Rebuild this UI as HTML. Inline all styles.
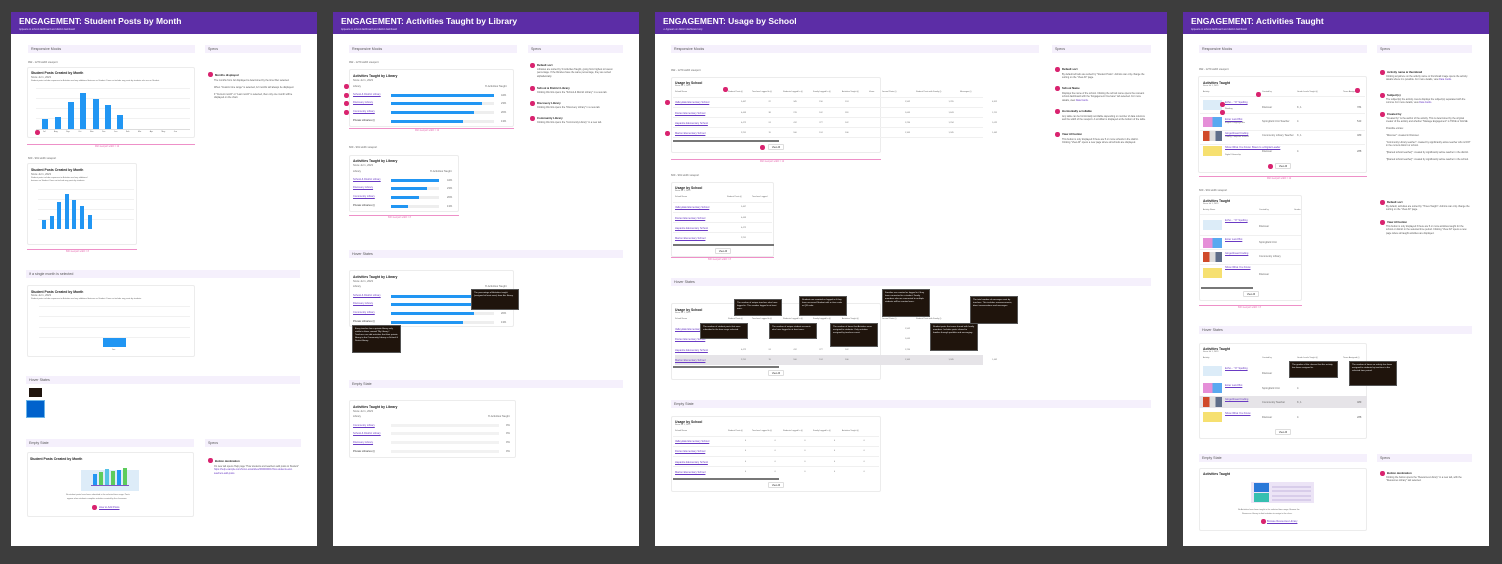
<!DOCTYPE html>
<html><head><meta charset="utf-8"><style>
*{margin:0;padding:0;box-sizing:border-box}
body{width:1502px;height:564px;background:#3d3d3d;position:relative;overflow:hidden;font-family:"Liberation Sans",sans-serif}
div,span{position:absolute}
.pg{background:#fff;top:12px;height:534px}
.hd{background:#5c2da6;top:12px;height:22px}
.h1{color:#fff;font-weight:bold;font-size:8.5px;white-space:nowrap}
.sub{color:#e8dcff;font-size:2.4px;white-space:nowrap}
.bar{background:#f5f0fc;height:8px;font-size:3.6px;color:#555;line-height:8px;padding-left:3px;white-space:nowrap}
.card{border:1px solid #ececec;border-radius:2px;background:#fff}
.t{font-size:2.6px;color:#666;white-space:nowrap}
.tt{font-size:3.4px;color:#222;font-weight:bold;white-space:nowrap}
.lk{font-size:2.6px;color:#6a3bc4;white-space:nowrap;text-decoration:underline}
.dim{height:1px;background:#ee90c8}
.dl{font-size:2.3px;color:#e56bb0;white-space:nowrap}
.dot{width:4.5px;height:4.5px;border-radius:50%;background:#d9236f}
.tip{background:#1f140c;border:1px solid #555;color:#eee;font-size:2.2px;line-height:3px;padding:2px}
.bl{background:#2196f3}
.tr{background:#eee;height:3px}
.gl{height:1px;background:#f1f1f1}
.sc{height:1.5px;background:#777}
.btn{border:1px solid #ddd;border-radius:1px;font-size:2.4px;color:#333;text-align:center;line-height:5px;height:6px;background:#fff}
.row{height:1px;background:#f0f0f0}
.sp{font-size:2.4px;color:#555;line-height:3.4px;width:85px;white-space:normal}
</style></head><body>

<!-- PAGE 1 -->
<div class="pg" style="left:11px;width:306px"></div>
<div class="hd" style="left:11px;width:306px"></div>
<div class="h1" style="left:19px;top:16px">ENGAGEMENT: Student Posts by Month</div>
<div class="sub" style="left:19px;top:28px">Appears on school dashboard and district dashboard</div>
<div class="bar" style="left:28px;top:45px;width:167px">Responsive Mocks</div>
<div class="bar" style="left:205px;top:45px;width:96px">Specs</div>
<div class="t" style="left:28px;top:61px">992 - 1279 width viewport</div>
<div class="card" style="left:27px;top:67px;width:168px;height:71px"></div>
<div class="tt" style="left:31px;top:71px">Student Posts Created by Month</div>
<div class="t" style="left:31px;top:76px">Since Jul 1, 2023</div>
<div class="t" style="left:31px;top:80px;font-size:2px">Student posts include responses to Activities and any additional features on Student. Does not include any posts by students who are on Student.</div>
<div class="gl" style="left:36px;top:88px;width:154px"></div>
<div class="gl" style="left:36px;top:98px;width:154px"></div>
<div class="gl" style="left:36px;top:108px;width:154px"></div>
<div class="gl" style="left:36px;top:118px;width:154px"></div>
<div style="left:36px;top:129px;width:154px;height:1px;background:#ddd"></div>
<div class="bl" style="left:42px;top:119px;width:6px;height:10px"></div>
<div class="bl" style="left:55px;top:117px;width:6px;height:12px"></div>
<div class="bl" style="left:68px;top:102px;width:6px;height:27px"></div>
<div class="bl" style="left:80px;top:93px;width:6px;height:36px"></div>
<div class="bl" style="left:93px;top:99px;width:6px;height:30px"></div>
<div class="bl" style="left:105px;top:105px;width:6px;height:24px"></div>
<div class="bl" style="left:117px;top:115px;width:6px;height:14px"></div>
<div class="t" style="left:43px;top:131px;font-size:2px;word-spacing:8px">Jul Aug Sep Oct Nov Dec Jan Feb Mar Apr May Jun</div>
<div class="dot" style="left:35px;top:130px"></div>
<div class="dim" style="left:27px;top:144px;width:168px"></div>
<div class="dl" style="left:95px;top:146px">992 viewport width = 12</div>
<div class="t" style="left:28px;top:157px">600 - 991 width viewport</div>
<div class="card" style="left:27px;top:163px;width:110px;height:82px"></div>
<div class="tt" style="left:31px;top:168px">Student Posts Created by Month</div>
<div class="t" style="left:31px;top:173px">Since Jul 1, 2023</div>
<div class="t" style="left:31px;top:177px;font-size:2px">Student posts include responses to Activities and any additional</div>
<div class="t" style="left:31px;top:180px;font-size:2px">features on Student. Does not include any posts by students.</div>
<div class="gl" style="left:38px;top:189px;width:96px"></div>
<div class="gl" style="left:38px;top:199px;width:96px"></div>
<div class="gl" style="left:38px;top:209px;width:96px"></div>
<div class="gl" style="left:38px;top:219px;width:96px"></div>
<div class="bl" style="left:42px;top:220px;width:3.5px;height:9px"></div>
<div class="bl" style="left:50px;top:216px;width:3.5px;height:13px"></div>
<div class="bl" style="left:57px;top:202px;width:3.5px;height:27px"></div>
<div class="bl" style="left:65px;top:194px;width:3.5px;height:35px"></div>
<div class="bl" style="left:72px;top:200px;width:3.5px;height:29px"></div>
<div class="bl" style="left:80px;top:206px;width:3.5px;height:23px"></div>
<div class="bl" style="left:88px;top:215px;width:3.5px;height:14px"></div>
<div class="dim" style="left:27px;top:249px;width:110px"></div>
<div class="dl" style="left:66px;top:251px">600 viewport width = 8</div>
<div class="bar" style="left:26px;top:270px;width:274px">If a single month is selected</div>
<div class="card" style="left:27px;top:285px;width:168px;height:72px"></div>
<div class="tt" style="left:31px;top:290px">Student Posts Created by Month</div>
<div class="t" style="left:31px;top:294px">Since Jul 1, 2023</div>
<div class="t" style="left:31px;top:298px;font-size:2px">Student posts include responses to Activities and any additional features on Student. Does not include any posts by students.</div>
<div class="gl" style="left:39px;top:306px;width:151px"></div>
<div class="gl" style="left:39px;top:316px;width:151px"></div>
<div class="gl" style="left:39px;top:327px;width:151px"></div>
<div class="gl" style="left:39px;top:337px;width:151px"></div>
<div class="bl" style="left:103px;top:338px;width:23px;height:9px"></div>
<div class="t" style="left:112px;top:349px;font-size:2px">Jan</div>
<div class="bar" style="left:26px;top:376px;width:274px">Hover States</div>
<div style="left:29px;top:388px;width:13px;height:9px;background:#20150e"></div>
<div style="left:26px;top:400px;width:19px;height:18px;background:#0062cc;border:1px solid #6ab4e8"></div>
<div class="bar" style="left:26px;top:439px;width:168px">Empty State</div>
<div class="bar" style="left:205px;top:439px;width:96px">Specs</div>
<div class="card" style="left:27px;top:452px;width:167px;height:65px"></div>
<div class="tt" style="left:30px;top:457px">Student Posts Created by Month</div>
<div style="left:81px;top:470px;width:58px;height:21px;background:#ddecf8"></div>
<div style="left:93px;top:474px;width:4px;height:12px;background:#2196f3"></div>
<div style="left:99px;top:472px;width:4px;height:14px;background:#5ccc5c"></div>
<div style="left:105px;top:469px;width:4px;height:17px;background:#56c2e6"></div>
<div style="left:111px;top:471px;width:4px;height:15px;background:#5ccc5c"></div>
<div style="left:117px;top:470px;width:4px;height:16px;background:#2196f3"></div>
<div style="left:123px;top:468px;width:4px;height:18px;background:#5ccc5c"></div>
<div style="left:91px;top:485px;width:38px;height:1px;background:#7e57c2"></div>
<div class="t" style="left:66px;top:494px;font-size:2px">No student posts have been submitted in the selected time range. Posts</div>
<div class="t" style="left:67px;top:498px;font-size:2px">appear when students complete activities created by the classroom.</div>
<div class="dot" style="left:92px;top:505px"></div>
<div class="lk" style="left:99px;top:506px">How to Add Posts</div>
<div class="dot" style="left:208px;top:458px"></div>
<div class="tt" style="left:215px;top:459px;font-size:2.8px">Button destination</div>
<div class="sp" style="left:214px;top:465px">On new tab opens Help page "How students and teachers add posts to Student" <span style="position:static;color:#6a3bc4">https://help.example.com/hc/en-us/articles/360000000-How-students-and-teachers-add-posts</span></div>
<div class="dot" style="left:208px;top:72px"></div>
<div class="tt" style="left:215px;top:73px;font-size:2.8px">Months displayed</div>
<div class="sp" style="left:214px;top:79px">The months from Jul displayed is determined by the time filter selected.<br><br>When "Custom time range" is selected, 12 months will always be displayed.<br><br>If "Current month" or "Last month" is selected, then only one month will be displayed on the chart.</div>

<!-- PAGE 2 -->
<div class="pg" style="left:333px;width:306px"></div>
<div class="hd" style="left:333px;width:306px"></div>
<div class="h1" style="left:341px;top:16px">ENGAGEMENT: Activities Taught by Library</div>
<div class="sub" style="left:341px;top:28px">Appears on school dashboard and district dashboard</div>
<div class="bar" style="left:349px;top:45px;width:168px">Responsive Mocks</div>
<div class="bar" style="left:528px;top:45px;width:95px">Specs</div>
<div class="t" style="left:349px;top:61px">992 - 1279 width viewport</div>
<div class="card" style="left:349px;top:69px;width:165px;height:58px"></div>
<div class="tt" style="left:353px;top:74px">Activities Taught by Library</div>
<div class="t" style="left:353px;top:79px">Since Jul 1, 2023</div>
<div class="t" style="left:353px;top:85px">Library</div><div class="t" style="left:485px;top:85px">% Activities Taught</div>
<div class="lk" style="left:353px;top:93px">School &amp; District Library</div>
<div class="lk" style="left:353px;top:101px">Discovery Library</div>
<div class="lk" style="left:353px;top:110px">Community Library</div>
<div class="t" style="left:353px;top:119px;color:#333">Private Libraries (i)</div>
<div class="tr" style="left:391px;top:94px;width:103px"></div><div class="bl" style="left:391px;top:94px;width:103px;height:3px"></div>
<div class="tr" style="left:391px;top:102px;width:103px"></div><div class="bl" style="left:391px;top:102px;width:91px;height:3px"></div>
<div class="tr" style="left:391px;top:111px;width:103px"></div><div class="bl" style="left:391px;top:111px;width:83px;height:3px"></div>
<div class="tr" style="left:391px;top:120px;width:103px"></div><div class="bl" style="left:391px;top:120px;width:72px;height:3px"></div>
<div class="t" style="left:501px;top:94px">44%</div><div class="t" style="left:501px;top:102px">23%</div><div class="t" style="left:501px;top:111px">20%</div><div class="t" style="left:501px;top:120px">13%</div>
<div class="dot" style="left:344px;top:84px"></div><div class="dot" style="left:344px;top:93px"></div><div class="dot" style="left:344px;top:101px"></div><div class="dot" style="left:344px;top:110px"></div>
<div class="dim" style="left:349px;top:128px;width:165px"></div>
<div class="dl" style="left:415px;top:130px">992 viewport width = 12</div>
<div class="t" style="left:349px;top:146px">600 - 991 width viewport</div>
<div class="card" style="left:349px;top:155px;width:110px;height:57px"></div>
<div class="tt" style="left:353px;top:159px">Activities Taught by Library</div>
<div class="t" style="left:353px;top:164px">Since Jul 1, 2023</div>
<div class="t" style="left:353px;top:170px">Library</div><div class="t" style="left:430px;top:170px">% Activities Taught</div>
<div class="lk" style="left:353px;top:178px">School &amp; District Library</div>
<div class="lk" style="left:353px;top:186px">Discovery Library</div>
<div class="lk" style="left:353px;top:195px">Community Library</div>
<div class="t" style="left:353px;top:204px;color:#333">Private Libraries (i)</div>
<div class="tr" style="left:391px;top:179px;width:48px"></div><div class="bl" style="left:391px;top:179px;width:48px;height:3px"></div>
<div class="tr" style="left:391px;top:187px;width:48px"></div><div class="bl" style="left:391px;top:187px;width:36px;height:3px"></div>
<div class="tr" style="left:391px;top:196px;width:48px"></div><div class="bl" style="left:391px;top:196px;width:28px;height:3px"></div>
<div class="tr" style="left:391px;top:205px;width:48px"></div><div class="bl" style="left:391px;top:205px;width:17px;height:3px"></div>
<div class="t" style="left:447px;top:179px">44%</div><div class="t" style="left:447px;top:187px">23%</div><div class="t" style="left:447px;top:196px">20%</div><div class="t" style="left:447px;top:205px">13%</div>
<div class="dim" style="left:349px;top:215px;width:110px"></div>
<div class="dl" style="left:388px;top:217px">600 viewport width = 8</div>
<div class="bar" style="left:349px;top:250px;width:274px">Hover States</div>
<div class="card" style="left:349px;top:270px;width:165px;height:57px"></div>
<div class="tt" style="left:353px;top:275px">Activities Taught by Library</div>
<div class="t" style="left:353px;top:280px">Since Jul 1, 2023</div>
<div class="t" style="left:353px;top:285px">Library</div><div class="t" style="left:485px;top:285px">% Activities Taught</div>
<div class="lk" style="left:353px;top:294px">School &amp; District Library</div>
<div class="lk" style="left:353px;top:302px">Discovery Library</div>
<div class="lk" style="left:353px;top:311px">Community Library</div>
<div class="t" style="left:353px;top:320px;color:#333">Private Libraries (i)</div>
<div class="tr" style="left:391px;top:295px;width:103px"></div><div class="bl" style="left:391px;top:295px;width:103px;height:3px"></div>
<div class="tr" style="left:391px;top:303px;width:103px"></div><div class="bl" style="left:391px;top:303px;width:91px;height:3px"></div>
<div class="tr" style="left:391px;top:312px;width:103px"></div><div class="bl" style="left:391px;top:312px;width:83px;height:3px"></div>
<div class="tr" style="left:391px;top:321px;width:103px"></div><div class="bl" style="left:391px;top:321px;width:72px;height:3px"></div>
<div class="t" style="left:501px;top:312px">20%</div><div class="t" style="left:501px;top:321px">13%</div>
<div class="tip" style="left:471px;top:289px;width:48px;height:21px">The percentage of Activities taught (assigned at least once) from this library.</div>
<div class="tip" style="left:352px;top:325px;width:49px;height:28px">Every teacher has a private library only visible to them, named "My Library". Teachers can add activities that their private library to the Community Library or School &amp; District library.</div>
<div class="bar" style="left:349px;top:380px;width:274px">Empty State</div>
<div class="card" style="left:349px;top:400px;width:167px;height:58px"></div>
<div class="tt" style="left:353px;top:405px">Activities Taught by Library</div>
<div class="t" style="left:353px;top:410px">Since Jul 1, 2023</div>
<div class="t" style="left:353px;top:415px">Library</div><div class="t" style="left:488px;top:415px">% Activities Taught</div>
<div class="lk" style="left:353px;top:424px">Community Library</div>
<div class="lk" style="left:353px;top:432px">School &amp; District Library</div>
<div class="lk" style="left:353px;top:441px">Discovery Library</div>
<div class="t" style="left:353px;top:450px;color:#333">Private Libraries (i)</div>
<div class="tr" style="left:391px;top:424px;width:108px;background:#f2f2f2"></div>
<div class="tr" style="left:391px;top:432px;width:108px;background:#f2f2f2"></div>
<div class="tr" style="left:391px;top:441px;width:108px;background:#f2f2f2"></div>
<div class="tr" style="left:391px;top:450px;width:108px;background:#f2f2f2"></div>
<div class="t" style="left:506px;top:424px">0%</div><div class="t" style="left:506px;top:432px">0%</div><div class="t" style="left:506px;top:441px">0%</div><div class="t" style="left:506px;top:450px">0%</div>
<div class="dot" style="left:530px;top:63px"></div><div class="tt" style="left:537px;top:63px;font-size:2.8px">Default sort</div>
<div class="sp" style="left:537px;top:68px;width:85px">Libraries are sorted by % Activities Taught, going from highest to lowest percentage. If the libraries have the same percentage, they are sorted alphabetically.</div>
<div class="dot" style="left:530px;top:86px"></div><div class="tt" style="left:537px;top:86px;font-size:2.8px">School &amp; District Library</div>
<div class="sp" style="left:537px;top:91px">Clicking this link opens the "School &amp; District Library" in a new tab.</div>
<div class="dot" style="left:530px;top:101px"></div><div class="tt" style="left:537px;top:101px;font-size:2.8px">Discovery Library</div>
<div class="sp" style="left:537px;top:106px">Clicking this link opens the "Discovery Library" in a new tab.</div>
<div class="dot" style="left:530px;top:116px"></div><div class="tt" style="left:537px;top:116px;font-size:2.8px">Community Library</div>
<div class="sp" style="left:537px;top:121px">Clicking this link opens the "Community Library" in a new tab.</div>

<!-- PAGE 3 -->
<div class="pg" style="left:655px;width:512px"></div>
<div class="hd" style="left:655px;width:512px"></div>
<div class="h1" style="left:663px;top:16px">ENGAGEMENT: Usage by School</div>
<div class="sub" style="left:663px;top:28px">&#9888; Appears on district dashboard only</div>
<div class="bar" style="left:671px;top:45px;width:368px">Responsive Mocks</div>
<div class="bar" style="left:1052px;top:45px;width:99px">Specs</div>
<div class="t" style="left:671px;top:69px">992 - 1279 width viewport</div>
<div class="card" style="left:671px;top:77px;width:210px;height:76px"></div>
<div class="tt" style="left:675px;top:81px">Usage by School</div>
<div class="t" style="left:675px;top:85px;font-size:2px">Since Jul 1, 2023</div>
<div class="t" style="left:675px;top:91px;font-size:2px;word-spacing:0">School Name</div>
<div class="t" style="left:728px;top:91px;font-size:2px">Student Posts (i)</div>
<div class="t" style="left:752px;top:91px;font-size:2px">Teachers Logged In (i)</div>
<div class="t" style="left:783px;top:91px;font-size:2px">Students Logged In (i)</div>
<div class="t" style="left:813px;top:91px;font-size:2px">Family Logged In (i)</div>
<div class="t" style="left:842px;top:91px;font-size:2px">Activities Taught (i)</div>
<div class="t" style="left:869px;top:91px;font-size:2px">Views</div>
<div class="t" style="left:882px;top:91px;font-size:2px">Journal Posts (i)</div>
<div class="t" style="left:916px;top:91px;font-size:2px">Student Posts with Family (i)</div>
<div class="t" style="left:960px;top:91px;font-size:2px">Messages (i)</div>
<div class="row" style="left:673px;top:97px;width:310px"></div>
<div class="lk" style="left:675px;top:101px">Valleydale Elementary School</div>
<div class="lk" style="left:675px;top:112px">Dorten Elementary School</div>
<div class="lk" style="left:675px;top:122px">Hapanite Elementary School</div>
<div class="lk" style="left:675px;top:132px">Marion Elementary School</div>
<div class="row" style="left:673px;top:107px;width:310px"></div>
<div class="row" style="left:673px;top:117px;width:310px"></div>
<div class="row" style="left:673px;top:127px;width:310px"></div>
<div class="row" style="left:673px;top:137px;width:310px"></div>
<div class="t" style="left:741px;top:101px;font-size:2px;word-spacing:22px">5,467 22 345 156 124</div>
<div class="t" style="left:741px;top:112px;font-size:2px;word-spacing:22px">4,443 38 276 102 118</div>
<div class="t" style="left:741px;top:122px;font-size:2px;word-spacing:22px">4,472 24 412 277 142</div>
<div class="t" style="left:741px;top:132px;font-size:2px;word-spacing:22px">2,291 19 160 124 106</div>
<div class="t" style="left:905px;top:101px;font-size:2px;word-spacing:38px">1,562 1,765 4,812</div>
<div class="t" style="left:905px;top:112px;font-size:2px;word-spacing:38px">1,645 1,643 1,211</div>
<div class="t" style="left:905px;top:122px;font-size:2px;word-spacing:38px">1,234 1,234 1,022</div>
<div class="t" style="left:905px;top:132px;font-size:2px;word-spacing:38px">1,345 1,345 1,402</div>
<div class="sc" style="left:673px;top:140px;width:106px"></div>
<div class="btn" style="left:768px;top:144px;width:16px">View All</div>
<div class="dot" style="left:760px;top:145px"></div>
<div class="dot" style="left:723px;top:87px"></div>
<div class="dot" style="left:665px;top:100px"></div>
<div class="dot" style="left:665px;top:131px"></div>
<div class="dim" style="left:671px;top:159px;width:210px"></div>
<div class="dl" style="left:760px;top:161px">992 viewport width = 12</div>
<div class="t" style="left:671px;top:174px">600 - 991 width viewport</div>
<div class="card" style="left:671px;top:182px;width:103px;height:75px"></div>
<div class="tt" style="left:675px;top:186px">Usage by School</div>
<div class="t" style="left:675px;top:190px;font-size:2px">Since Jul 1, 2023</div>
<div class="t" style="left:675px;top:196px;font-size:2px">School Name</div>
<div class="t" style="left:727px;top:196px;font-size:2px">Student Posts (i)</div>
<div class="t" style="left:752px;top:196px;font-size:2px">Teachers Logged</div>
<div class="lk" style="left:675px;top:206px">Valleydale Elementary School</div>
<div class="lk" style="left:675px;top:217px">Dorten Elementary School</div>
<div class="lk" style="left:675px;top:227px">Hapanite Elementary School</div>
<div class="lk" style="left:675px;top:237px">Marion Elementary School</div>
<div class="row" style="left:673px;top:202px;width:99px"></div>
<div class="row" style="left:673px;top:212px;width:99px"></div>
<div class="row" style="left:673px;top:222px;width:99px"></div>
<div class="row" style="left:673px;top:232px;width:99px"></div>
<div class="t" style="left:741px;top:206px;font-size:2px">5,467</div><div class="t" style="left:741px;top:217px;font-size:2px">4,443</div><div class="t" style="left:741px;top:227px;font-size:2px">4,472</div><div class="t" style="left:741px;top:237px;font-size:2px">2,291</div>
<div class="sc" style="left:673px;top:244px;width:101px"></div>
<div class="btn" style="left:715px;top:248px;width:16px">View All</div>
<div class="dim" style="left:671px;top:257px;width:103px"></div>
<div class="dl" style="left:708px;top:259px">600 viewport width = 8</div>
<div class="bar" style="left:671px;top:278px;width:480px">Hover States</div>
<div class="card" style="left:671px;top:303px;width:210px;height:77px"></div>
<div class="tt" style="left:675px;top:308px">Usage by School</div>
<div class="t" style="left:675px;top:312px;font-size:2px">Since Jul 1, 2023</div>
<div class="t" style="left:675px;top:318px;font-size:2px">School Name</div>
<div class="t" style="left:728px;top:318px;font-size:2px">Student Posts (i)</div>
<div class="t" style="left:752px;top:318px;font-size:2px">Teachers Logged In (i)</div>
<div class="t" style="left:783px;top:318px;font-size:2px">Students Logged In (i)</div>
<div class="t" style="left:813px;top:318px;font-size:2px">Family Logged In (i)</div>
<div class="t" style="left:842px;top:318px;font-size:2px">Activities Taught (i)</div>
<div class="t" style="left:882px;top:318px;font-size:2px">Journal Posts (i)</div>
<div class="t" style="left:916px;top:318px;font-size:2px">Student Posts with Family (i)</div>
<div style="left:675px;top:355px;width:308px;height:10px;background:#e6e4e8"></div>
<div class="lk" style="left:675px;top:328px">Valleydale Elementary School</div>
<div class="lk" style="left:675px;top:338px">Dorten Elementary School</div>
<div class="lk" style="left:675px;top:349px">Hapanite Elementary School</div>
<div class="lk" style="left:675px;top:359px">Marion Elementary School</div>
<div class="t" style="left:741px;top:349px;font-size:2px;word-spacing:22px">4,472 24 412 277 142</div>
<div class="t" style="left:741px;top:359px;font-size:2px;word-spacing:22px">2,291 19 160 124 106</div>
<div class="t" style="left:905px;top:328px;font-size:2px">1,562</div>
<div class="t" style="left:905px;top:338px;font-size:2px">1,645</div>
<div class="t" style="left:905px;top:349px;font-size:2px">1,234</div>
<div class="t" style="left:905px;top:359px;font-size:2px;word-spacing:38px">1,345 1,345 1,402</div>
<div class="sc" style="left:673px;top:366px;width:106px"></div>
<div class="btn" style="left:768px;top:370px;width:16px">View All</div>
<div class="tip" style="left:734px;top:299px;width:48px;height:17px">The number of unique teachers who have logged in. This number logged in at least once.</div>
<div class="tip" style="left:799px;top:296px;width:48px;height:20px">Students are counted as logged in if they have accessed Student with a class code or QR code.</div>
<div class="tip" style="left:882px;top:289px;width:48px;height:28px">Families are counted as logged in if they have connected to a student. Family members who are connected to multiple students will be counted once.</div>
<div class="tip" style="left:970px;top:296px;width:48px;height:28px">The total number of messages sent by teachers. This includes announcements, direct conversations and messages.</div>
<div class="tip" style="left:700px;top:323px;width:48px;height:16px">The number of student posts that were submitted in the time range selected.</div>
<div class="tip" style="left:769px;top:323px;width:48px;height:16px">The number of unique student accounts who have logged in at least once.</div>
<div class="tip" style="left:830px;top:323px;width:48px;height:24px">The number of times that Activities were assigned to students. Only activities assigned by teachers count.</div>
<div class="tip" style="left:930px;top:323px;width:48px;height:28px">Student posts that were shared with family members. Includes posts shared to families through portfolio and messaging.</div>
<div class="bar" style="left:671px;top:400px;width:480px">Empty State</div>
<div class="card" style="left:671px;top:416px;width:210px;height:76px"></div>
<div class="tt" style="left:675px;top:420px">Usage by School</div>
<div class="t" style="left:675px;top:424px;font-size:2px">Since Jul 1, 2023</div>
<div class="t" style="left:675px;top:430px;font-size:2px">School Name</div>
<div class="t" style="left:728px;top:430px;font-size:2px">Student Posts (i)</div>
<div class="t" style="left:752px;top:430px;font-size:2px">Teachers Logged In (i)</div>
<div class="t" style="left:783px;top:430px;font-size:2px">Students Logged In (i)</div>
<div class="t" style="left:813px;top:430px;font-size:2px">Family Logged In (i)</div>
<div class="t" style="left:842px;top:430px;font-size:2px">Activities Taught (i)</div>
<div class="lk" style="left:675px;top:440px">Valleydale Elementary School</div>
<div class="lk" style="left:675px;top:450px">Dorten Elementary School</div>
<div class="lk" style="left:675px;top:461px">Hapanite Elementary School</div>
<div class="lk" style="left:675px;top:471px">Marion Elementary School</div>
<div class="row" style="left:673px;top:436px;width:206px"></div>
<div class="row" style="left:673px;top:446px;width:206px"></div>
<div class="row" style="left:673px;top:456px;width:206px"></div>
<div class="row" style="left:673px;top:466px;width:206px"></div>
<div class="t" style="left:745px;top:440px;font-size:2px;word-spacing:28px">0 0 0 0 0</div>
<div class="t" style="left:745px;top:450px;font-size:2px;word-spacing:28px">0 0 0 0 0</div>
<div class="t" style="left:745px;top:461px;font-size:2px;word-spacing:28px">0 0 0 0 0</div>
<div class="t" style="left:745px;top:471px;font-size:2px;word-spacing:28px">0 0 0 0 0</div>
<div class="sc" style="left:673px;top:478px;width:106px"></div>
<div class="btn" style="left:768px;top:482px;width:16px">View All</div>
<div class="dot" style="left:1055px;top:67px"></div><div class="tt" style="left:1062px;top:67px;font-size:2.8px">Default sort</div>
<div class="sp" style="left:1062px;top:73px">By default schools are sorted by "Student Posts". Admins can only change the sorting on the "View All" page.</div>
<div class="dot" style="left:1055px;top:86px"></div><div class="tt" style="left:1062px;top:86px;font-size:2.8px">School Name</div>
<div class="sp" style="left:1062px;top:92px">Displays the name of the school. Clicking the school name opens the relevant school dashboard with the "Engagement Overview" tab selected. For more details, view <span style="position:static;color:#6a3bc4">Data Cards</span>.</div>
<div class="dot" style="left:1055px;top:109px"></div><div class="tt" style="left:1062px;top:109px;font-size:2.8px">Horizontally scrollable</div>
<div class="sp" style="left:1062px;top:115px">Any table can be horizontally scrollable depending on number of data columns and the width of the viewport. A scrollbar is displayed at the bottom of the table.</div>
<div class="dot" style="left:1055px;top:132px"></div><div class="tt" style="left:1062px;top:132px;font-size:2.8px">View All button</div>
<div class="sp" style="left:1062px;top:138px">This button is only displayed if there are 5 or more schools in the district. Clicking "View All" opens a new page where all schools are displayed.</div>

<!-- PAGE 4 -->
<div class="pg" style="left:1183px;width:306px"></div>
<div class="hd" style="left:1183px;width:306px"></div>
<div class="h1" style="left:1191px;top:16px">ENGAGEMENT: Activities Taught</div>
<div class="sub" style="left:1191px;top:28px">Appears on school dashboard and district dashboard</div>
<div class="bar" style="left:1199px;top:45px;width:168px">Responsive Mocks</div>
<div class="bar" style="left:1377px;top:45px;width:95px">Specs</div>
<div class="t" style="left:1199px;top:68px">992 - 1279 width viewport</div>
<div class="card" style="left:1198px;top:76px;width:169px;height:97px"></div>
<div class="tt" style="left:1203px;top:81px">Activities Taught</div>
<div class="t" style="left:1203px;top:85px;font-size:2px">Since Jul 1, 2023</div>
<div class="t" style="left:1203px;top:91px;font-size:2px">Activity</div><div class="t" style="left:1262px;top:91px;font-size:2px">Created by</div><div class="t" style="left:1297px;top:91px;font-size:2px">Grade Levels Taught (i)</div><div class="t" style="left:1343px;top:91px;font-size:2px">Times Assigned (i)</div>
<div class="row" style="left:1200px;top:96px;width:165px"></div>
<div class="row" style="left:1200px;top:113px;width:165px"></div>
<div class="row" style="left:1200px;top:130px;width:165px"></div>
<div class="row" style="left:1200px;top:144px;width:165px"></div>
<div style="left:1203px;top:100px;width:19px;height:10px;background:#dcecf8"></div>
<div style="left:1203px;top:117px;width:19px;height:10px;background:linear-gradient(90deg,#e58fd8 50%,#59a9f0 50%)"></div>
<div style="left:1203px;top:131px;width:19px;height:10px;background:linear-gradient(90deg,#d04a2a 33%,#ddd 33%,#ddd 66%,#5f6e8a 66%)"></div>
<div style="left:1203px;top:146px;width:19px;height:10px;background:#f6e070"></div>
<div class="lk" style="left:1225px;top:101px">Echo... "O" Spelling</div>
<div class="t" style="left:1225px;top:108px;font-size:2px">Reading</div>
<div class="lk" style="left:1225px;top:118px">Enter Land Bot</div>
<div class="t" style="left:1225px;top:122px;font-size:2px">English Language Arts</div>
<div class="lk" style="left:1225px;top:132px">Gingerbread Coding</div>
<div class="t" style="left:1225px;top:136px;font-size:2px">Coding, Computer Science</div>
<div class="lk" style="left:1225px;top:146px">Show What You Know: Bravo Is a Digital Leader</div>
<div class="t" style="left:1225px;top:154px;font-size:2px">Digital Citizenship</div>
<div class="t" style="left:1262px;top:106px">Discover</div>
<div class="t" style="left:1262px;top:120px">Springfield Unit Teacher</div>
<div class="t" style="left:1262px;top:134px">Community Library Teacher</div>
<div class="t" style="left:1262px;top:150px">Discover</div>
<div class="t" style="left:1297px;top:106px">K, 1</div><div class="t" style="left:1297px;top:120px">4</div><div class="t" style="left:1297px;top:134px">K, 1</div><div class="t" style="left:1297px;top:150px">4</div>
<div class="t" style="left:1357px;top:106px">784</div><div class="t" style="left:1357px;top:120px">543</div><div class="t" style="left:1357px;top:134px">489</div><div class="t" style="left:1357px;top:150px">288</div>
<div class="btn" style="left:1275px;top:163px;width:16px">View All</div>
<div class="dot" style="left:1268px;top:164px"></div>
<div class="dot" style="left:1220px;top:102px"></div>
<div class="dot" style="left:1220px;top:110px"></div>
<div class="dot" style="left:1256px;top:92px"></div>
<div class="dot" style="left:1355px;top:88px"></div>
<div class="dim" style="left:1199px;top:176px;width:168px"></div>
<div class="dl" style="left:1267px;top:178px">992 viewport width = 12</div>
<div class="t" style="left:1199px;top:189px">600 - 991 width viewport</div>
<div class="card" style="left:1199px;top:195px;width:103px;height:106px"></div>
<div class="tt" style="left:1203px;top:199px">Activities Taught</div>
<div class="t" style="left:1203px;top:203px;font-size:2px">Since Jul 1, 2023</div>
<div class="t" style="left:1203px;top:209px;font-size:2px">Activity Name</div><div class="t" style="left:1259px;top:209px;font-size:2px">Created by</div><div class="t" style="left:1294px;top:209px;font-size:2px">Grades</div>
<div class="row" style="left:1200px;top:214px;width:101px"></div>
<div class="row" style="left:1200px;top:235px;width:101px"></div>
<div class="row" style="left:1200px;top:249px;width:101px"></div>
<div class="row" style="left:1200px;top:264px;width:101px"></div>
<div style="left:1203px;top:220px;width:19px;height:10px;background:#dcecf8"></div>
<div style="left:1203px;top:238px;width:19px;height:10px;background:linear-gradient(90deg,#e58fd8 50%,#59a9f0 50%)"></div>
<div style="left:1203px;top:252px;width:19px;height:10px;background:linear-gradient(90deg,#d04a2a 33%,#ddd 33%,#ddd 66%,#5f6e8a 66%)"></div>
<div style="left:1203px;top:268px;width:19px;height:10px;background:#f6e070"></div>
<div class="lk" style="left:1225px;top:219px">Echo... "O" Spelling</div>
<div class="lk" style="left:1225px;top:238px">Enter Land Bot</div>
<div class="lk" style="left:1225px;top:252px">Gingerbread Coding</div>
<div class="lk" style="left:1225px;top:266px">Show What You Know</div>
<div class="t" style="left:1259px;top:225px">Discover</div><div class="t" style="left:1259px;top:241px">Springfield Unit</div><div class="t" style="left:1259px;top:255px">Community Library</div><div class="t" style="left:1259px;top:273px">Discover</div>
<div class="sc" style="left:1201px;top:287px;width:52px"></div>
<div class="btn" style="left:1243px;top:291px;width:16px">View All</div>
<div class="dim" style="left:1199px;top:305px;width:103px"></div>
<div class="dl" style="left:1238px;top:307px">600 viewport width = 8</div>
<div class="bar" style="left:1199px;top:326px;width:273px">Hover States</div>
<div class="card" style="left:1199px;top:343px;width:168px;height:96px"></div>
<div class="tt" style="left:1203px;top:347px">Activities Taught</div>
<div class="t" style="left:1203px;top:351px;font-size:2px">Since Jul 1, 2023</div>
<div class="t" style="left:1203px;top:357px;font-size:2px">Activity</div><div class="t" style="left:1262px;top:357px;font-size:2px">Created by</div><div class="t" style="left:1297px;top:357px;font-size:2px">Grade Levels Taught (i)</div><div class="t" style="left:1343px;top:357px;font-size:2px">Times Assigned (i)</div>
<div style="left:1199px;top:396px;width:168px;height:12px;background:#e6e4e8"></div>
<div style="left:1203px;top:366px;width:19px;height:10px;background:#dcecf8"></div>
<div style="left:1203px;top:383px;width:19px;height:10px;background:linear-gradient(90deg,#e58fd8 50%,#59a9f0 50%)"></div>
<div style="left:1203px;top:397px;width:19px;height:10px;background:linear-gradient(90deg,#d04a2a 33%,#ddd 33%,#ddd 66%,#5f6e8a 66%)"></div>
<div style="left:1203px;top:412px;width:19px;height:10px;background:#f6e070"></div>
<div class="lk" style="left:1225px;top:367px">Echo... "O" Spelling</div>
<div class="lk" style="left:1225px;top:384px">Enter Land Bot</div>
<div class="lk" style="left:1225px;top:398px">Gingerbread Coding</div>
<div class="lk" style="left:1225px;top:412px">Show What You Know</div>
<div class="t" style="left:1262px;top:372px">Discover</div><div class="t" style="left:1262px;top:387px">Springfield Unit</div><div class="t" style="left:1262px;top:401px">Community Teacher</div><div class="t" style="left:1262px;top:416px">Discover</div>
<div class="t" style="left:1297px;top:387px">4</div><div class="t" style="left:1297px;top:401px">K, 1</div><div class="t" style="left:1297px;top:416px">4</div>
<div class="t" style="left:1357px;top:401px">489</div><div class="t" style="left:1357px;top:416px">288</div>
<div class="btn" style="left:1275px;top:429px;width:16px">View All</div>
<div class="tip" style="left:1289px;top:361px;width:49px;height:17px">The grades of the classes that this activity has been assigned to.</div>
<div class="tip" style="left:1349px;top:361px;width:48px;height:25px">The number of times an activity has been assigned to students by teachers in the selected time period.</div>
<div class="bar" style="left:1199px;top:454px;width:168px">Empty State</div>
<div class="bar" style="left:1377px;top:454px;width:95px">Specs</div>
<div class="card" style="left:1199px;top:468px;width:168px;height:63px"></div>
<div class="tt" style="left:1203px;top:472px">Activities Taught</div>
<div style="left:1251px;top:482px;width:63px;height:21px;background:#ece4f6"></div>
<div style="left:1254px;top:483px;width:15px;height:9px;background:#2a78d8"></div>
<div style="left:1254px;top:493px;width:15px;height:9px;background:#36bfb0"></div>
<div style="left:1272px;top:486px;width:39px;height:2px;background:#d8cdea"></div>
<div style="left:1272px;top:490px;width:39px;height:2px;background:#d8cdea"></div>
<div style="left:1272px;top:495px;width:39px;height:2px;background:#d8cdea"></div>
<div style="left:1272px;top:499px;width:39px;height:2px;background:#d8cdea"></div>
<div class="t" style="left:1238px;top:509px;font-size:2px">No Activities have been taught in the selected time range. Browse the</div>
<div class="t" style="left:1242px;top:513px;font-size:2px">Resources Library to find activities to assign to the class.</div>
<div class="dot" style="left:1261px;top:519px"></div>
<div class="lk" style="left:1267px;top:520px">Browse Resources Library</div>
<div class="dot" style="left:1380px;top:70px"></div><div class="tt" style="left:1387px;top:70px;font-size:2.8px">Activity name &amp; thumbnail</div>
<div class="sp" style="left:1386px;top:75px">Clicking anywhere on the activity name or thumbnail image opens the activity details where it is possible. For more details, view <span style="position:static;color:#6a3bc4">Data Cards</span>.</div>
<div class="dot" style="left:1380px;top:93px"></div><div class="tt" style="left:1387px;top:93px;font-size:2.8px">Subject(s)</div>
<div class="sp" style="left:1386px;top:98px">The subject(s) the activity covers displays the subject(s) separated with the comma. For more details, view <span style="position:static;color:#6a3bc4">Data Cards</span>.</div>
<div class="dot" style="left:1380px;top:112px"></div><div class="tt" style="left:1387px;top:112px;font-size:2.8px">Created by</div>
<div class="sp" style="left:1386px;top:117px">"Created by" is the author of the activity. This is determined by the original creator of the activity and whether "Manage Engagement" is TRUE or FALSE.<br><br>Possible entries:<br><br>"Discover": created in Discover.<br><br>"Community Library teacher": created by significantly active teacher who is NOT in the current district or school.<br><br>"[Named school teacher]": created by significantly active teacher in the district.<br><br>"[Named school teacher]": created by significantly active teacher in the school.</div>
<div class="dot" style="left:1380px;top:200px"></div><div class="tt" style="left:1387px;top:200px;font-size:2.8px">Default sort</div>
<div class="sp" style="left:1386px;top:205px">By default, activities are sorted by "Times Taught". Admins can only change the sorting on the "View All" page.</div>
<div class="dot" style="left:1380px;top:220px"></div><div class="tt" style="left:1387px;top:220px;font-size:2.8px">View All button</div>
<div class="sp" style="left:1386px;top:225px">This button is only displayed if there are 5 or more activities taught for the school or district in the selected time period. Clicking "View All" opens a new page where all taught activities are displayed.</div>
<div class="dot" style="left:1380px;top:471px"></div><div class="tt" style="left:1387px;top:471px;font-size:2.8px">Button destination</div>
<div class="sp" style="left:1386px;top:476px">Clicking the button opens the "Resources Library" in a new tab, with the "Resources Library" tab selected.</div>
</body></html>
